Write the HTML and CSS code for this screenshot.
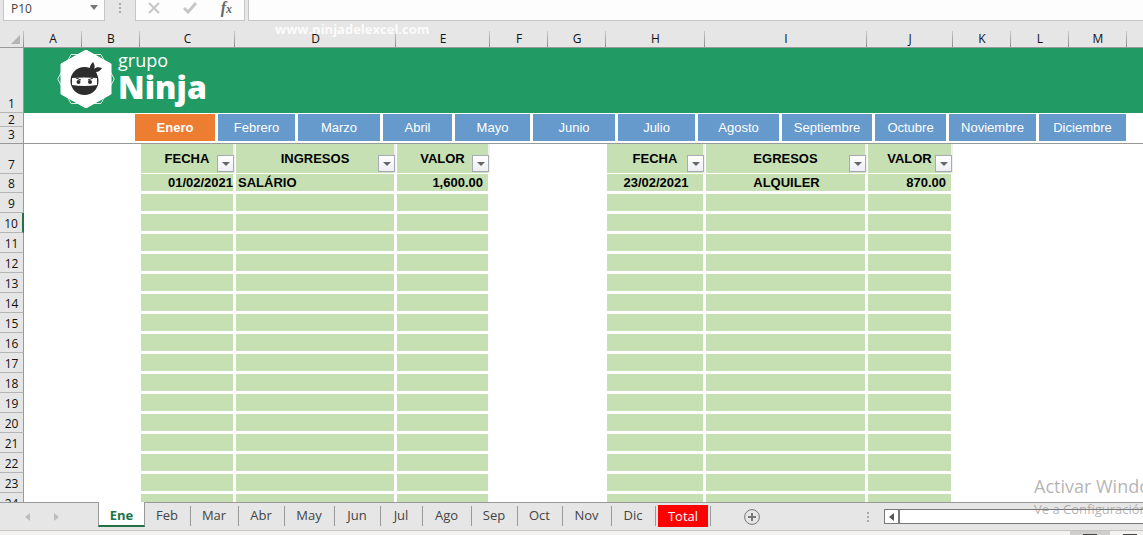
FILE: index.html
```
<!DOCTYPE html>
<html lang="es">
<head>
    <meta charset="UTF-8">
    <meta name="viewport" content="width=device-width, initial-scale=1.0">
    <title>Ingresos y Egresos</title>
    <link rel="stylesheet" href="styles.css">
</head>
<body>

    <div class="formula-bar">
        <div class="name-box">
            <input type="text" value="P10" aria-label="Cuadro de nombres">
            <button type="button" aria-label="Ver nombres"><span class="arrow-down"></span></button>
        </div>
        <span class="dots"></span>
        <div class="formula-buttons">
            <button type="button" aria-label="Cancelar">
                <svg width="12" height="12" viewBox="0 0 12 12"><path d="M1 1L11 11M11 1L1 11" stroke="#c6c6c6" stroke-width="2" fill="none"/></svg>
            </button>
            <button type="button" aria-label="Introducir">
                <svg width="14" height="12" viewBox="0 0 14 12"><path d="M1 6L5 10L13 1" stroke="#c6c6c6" stroke-width="3" fill="none"/></svg>
            </button>
            <button type="button" class="fx" aria-label="Insertar función">f<small>x</small></button>
        </div>
        <input type="text" class="formula-input" aria-label="Barra de fórmulas">
    </div>

    <main class="sheet">
        <table class="grid">
            <colgroup>
                <col class="w-head"><col class="w-s"><col class="w-s"><col class="w-c"><col class="w-d"><col class="w-e"><col class="w-s">
                <col class="w-s"><col class="w-h"><col class="w-i"><col class="w-j"><col class="w-s"><col class="w-s"><col class="w-s"><col>
            </colgroup>
            <thead>
                <tr>
                    <th class="corner"><svg width="9" height="9" viewBox="0 0 9 9"><path d="M9 0V9H0Z" fill="#b4b4b4"/></svg></th>
                    <th>A</th><th>B</th><th>C</th><th>D</th><th>E</th><th>F</th><th>G</th>
                    <th>H</th><th>I</th><th>J</th><th>K</th><th>L</th><th>M</th><th></th>
                </tr>
            </thead>
            <tbody id="rows">
                <tr class="row-banner">
                    <th>1</th>
                    <td colspan="14" class="banner">
                        <div class="logo">
                            <svg width="58" height="58" viewBox="0 0 58 58">
                                <path d="M.7 29L14 4.500H44L57.300 29L44 53.500H14Z" fill="none" stroke="#d5eee2" stroke-width="1"/>
                                <path d="M29 0L54 14V44L29 58L4 44V14Z" fill="#fff" stroke="#fff" stroke-width="1" stroke-linejoin="round"/>
                                <circle cx="27.500" cy="31" r="14" fill="#2d2d2d"/>
                                <path d="M33 21C32 17 34 14 36 12C38 15 38 17 37 19C39 17 42 17 45 18C43 21 41 22 39 22C40 23 40 25 39 26Z" fill="#2d2d2d"/>
                                <path d="M15 28Q27 27 40 28V35Q27 37 15 35Z" fill="#fff"/>
                                <path d="M19 28L24 30M36 28L31 30" stroke="#2d2d2d" stroke-width="1"/>
                                <circle cx="21.500" cy="32" r="2" fill="#2d2d2d"/>
                                <circle cx="33" cy="32" r="2" fill="#2d2d2d"/>
                            </svg>
                            <div class="logo-text"><span>grupo</span><strong>Ninja</strong></div>
                        </div>
                    </td>
                </tr>
                <tr class="row-2">
                    <th>2</th>
                    <td></td><td class="months" rowspan="2" colspan="13">
                        <nav>
                            <a href="#" class="active">Enero</a><a href="#">Febrero</a><a href="#">Marzo</a><a href="#">Abril</a>
                            <a href="#">Mayo</a><a href="#">Junio</a><a href="#">Julio</a><a href="#">Agosto</a>
                            <a href="#">Septiembre</a><a href="#">Octubre</a><a href="#">Noviembre</a><a href="#">Diciembre</a>
                        </nav>
                    </td>
                </tr>
                <tr class="row-3"><th>3</th><td></td></tr>
                <tr class="row-titles">
                    <th>7</th><td></td><td></td>
                    <td class="title">FECHA<button type="button" class="filter" aria-label="Filtrar fecha"></button></td>
                    <td class="title">INGRESOS<button type="button" class="filter" aria-label="Filtrar ingresos"></button></td>
                    <td class="title">VALOR<button type="button" class="filter" aria-label="Filtrar valor"></button></td>
                    <td></td><td></td>
                    <td class="title">FECHA<button type="button" class="filter" aria-label="Filtrar fecha"></button></td>
                    <td class="title">EGRESOS<button type="button" class="filter" aria-label="Filtrar egresos"></button></td>
                    <td class="title">VALOR<button type="button" class="filter" aria-label="Filtrar valor"></button></td>
                    <td></td><td></td><td></td><td></td>
                </tr>
                <tr class="row-first">
                    <th>8</th><td></td><td></td>
                    <td class="cell right">01/02/2021</td><td class="cell">SALÁRIO</td><td class="cell amount">1,600.00</td>
                    <td></td><td></td>
                    <td class="cell center">23/02/2021</td><td class="cell center">ALQUILER</td><td class="cell amount">870.00</td>
                    <td></td><td></td><td></td><td></td>
                </tr>
            </tbody>
        </table>
    </main>

    <footer>
        <div class="tab-bar">
            <div class="tab-arrows">
                <button type="button" aria-label="Anterior"><svg width="5" height="8" viewBox="0 0 5 8"><path d="M5 0V8L0 4Z" fill="#bdbdbd"/></svg></button>
                <button type="button" aria-label="Siguiente"><svg width="5" height="8" viewBox="0 0 5 8"><path d="M0 0V8L5 4Z" fill="#bdbdbd"/></svg></button>
            </div>
            <div class="tabs">
                <button type="button" class="selected">Ene</button>
                <button type="button">Feb</button>
                <button type="button">Mar</button>
                <button type="button">Abr</button>
                <button type="button">May</button>
                <button type="button">Jun</button>
                <button type="button">Jul</button>
                <button type="button">Ago</button>
                <button type="button">Sep</button>
                <button type="button">Oct</button>
                <button type="button">Nov</button>
                <button type="button">Dic</button>
                <button type="button" class="total"><span>Total</span></button>
            </div>
            <button type="button" class="add-sheet" aria-label="Hoja nueva">
                <svg width="16" height="16" viewBox="0 0 16 16"><circle cx="8" cy="8" r="7.400" fill="none" stroke="#777" stroke-width="1"/><path d="M8 4V12M4 8H12" stroke="#777" stroke-width="2"/></svg>
            </button>
            <span class="dots tab-dots"></span>
            <div class="scrollbar">
                <button type="button" aria-label="Desplazar a la izquierda"><svg width="5" height="8" viewBox="0 0 5 8"><path d="M5 0V8L0 4Z" fill="#555"/></svg></button>
            </div>
        </div>
        <div class="status-bar"><span class="view view-on"></span><span class="view"></span></div>
    </footer>

    <div class="site-mark">www.ninjadelexcel.com</div>
    <div class="activate"><p>Activar Windows</p><small>Ve a Configuración</small></div>

    <script>
        // Empty rows 9 to 24
        const rows = document.getElementById('rows');
        const blank = '<td></td>';
        const cell = '<td class="cell"></td>';
        for (let i = 9; i <= 24; i++) {
            const tr = document.createElement('tr');
            tr.className = i === 10 ? 'row-data current' : 'row-data';
            tr.innerHTML = `<th>${i}</th>` + blank.repeat(2) + cell.repeat(3) + blank.repeat(2) + cell.repeat(3) + blank.repeat(4);
            rows.appendChild(tr);
        }
    </script>

</body>
</html>
```
FILE: styles.css
```
* {
    box-sizing: border-box;
}
body {
    margin: 0;
    height: 100vh;
    display: flex;
    flex-direction: column;
    position: relative;
    overflow: hidden;
    background-color: #e6e6e6;
    font-family: "Open Sans", "Noto Sans", sans-serif;
    font-size: 12px;
    color: #222;
}
button, input {
    font: inherit;
    color: inherit;
    border: none;
    background: none;
    padding: 0;
    margin: 0;
}

/* Formula bar */
.formula-bar {
    display: flex;
    flex: none;
    height: 21px;
}
.name-box, .formula-buttons, .formula-input {
    background-color: #fdfdfd;
    border: 1px solid #c6c6c6;
    border-top: none;
}
.name-box {
    display: flex;
    width: 102px;
    margin-left: 3px;
    padding: 0 6px 3px 7px;
}
.name-box input {
    flex: 1;
    min-width: 0;
    color: #444;
}
.arrow-down {
    display: block;
    border: 4px solid transparent;
    border-top: 5px solid #777;
    border-bottom: none;
    margin-bottom: 3px;
}
.dots {
    width: 2px;
    height: 10px;
    margin: 3px 14px 0;
    background: repeating-linear-gradient(#aaa 0 2px, transparent 2px 4px);
}
.formula-buttons {
    display: flex;
    justify-content: space-between;
    align-items: center;
    width: 110px;
    padding: 0 12px 4px;
}
.formula-buttons svg {
    display: block;
}
.fx {
    font-family: "Liberation Serif", serif;
    font-style: italic;
    font-weight: bold;
    font-size: 16px;
    line-height: 16px;
    color: #666;
}
.fx small {
    font-size: 12px;
}
.formula-input {
    flex: 1;
    min-width: 0;
    margin-left: 3px;
    border-right: none;
}

/* Sheet */
.sheet {
    flex: 1;
    min-height: 0;
    overflow: hidden;
    background-color: #fff;
}
.grid {
    width: 100%;
    table-layout: fixed;
    border-collapse: separate;
    border-spacing: 0;
}
.w-head { width: 24px; }
.w-s { width: 58px; }
.w-c { width: 95px; }
.w-d { width: 161px; }
.w-e { width: 94px; }
.w-h { width: 99px; }
.w-i { width: 162px; }
.w-j { width: 86px; }
.grid th, .grid td {
    padding: 0;
}
.grid th {
    background-color: #e6e6e6;
    font-weight: normal;
    color: #111;
}
.grid thead th {
    height: 27px;
    padding-top: 10px;
    line-height: 16px;
    border-bottom: 1px solid #999;
    background-image: linear-gradient(#c8c8c8, #8c8c8c);
    background-size: 1px 16px;
    background-position: right bottom;
    background-repeat: no-repeat;
}
.grid thead th:last-child {
    background-image: none;
}
.corner svg {
    display: block;
    margin-left: 11px;
}
tbody th {
    border-right: 1px solid #999;
    border-bottom: 1px solid #b4b4b4;
    line-height: 16px;
    vertical-align: bottom;
}
.current th {
    border-right: 2px solid #217346;
}
.row-banner { height: 65px; }
.row-2 { height: 14px; }
.row-3 { height: 17px; }
.row-titles { height: 30px; }
.row-first { height: 19px; }
.row-data { height: 20px; }
.row-2 th {
    line-height: 12px;
}
.row-3 th, .row-3 td, .months {
    border-bottom: 1px solid #999;
}
.banner {
    background-color: #219a63;
    color: #fff;
    vertical-align: top;
}

.logo {
    display: flex;
    height: 65px;
    padding: 2px 0 0 33px;
}
.logo-text {
    display: flex;
    flex-direction: column;
    margin-left: 3px;
}
.logo-text span {
    font-size: 18px;
    line-height: 20px;
}
.logo-text strong {
    font-size: 32px;
    font-weight: 800;
    line-height: 34px;
}

.months {
    vertical-align: top;
}
.months nav {
    display: grid;
    grid-template-columns: 81px 78px 83px 70px 76px 83px 78px 82px 91px 72px 88px 88px;
    column-gap: 2px;
    padding-top: 1px;
    margin-left: 53px;
}
.months a {
    height: 27px;
    border-right: 1px solid #fff;
    background-color: #6699cc;
    color: #fff;
    font: 13px/27px "Liberation Sans", Arial, sans-serif;
    text-align: center;
    text-decoration: none;
}
.months a.active {
    background-color: #ed7d31;
    font-weight: bold;
}

.title, .cell {
    background-color: #c6e0b4;
    border: solid #fff;
    color: #000;
    font: bold 13px/16px "Liberation Sans", Arial, sans-serif;
}
.title {
    position: relative;
    border-width: 0 2px 1px 1px;
    border-right-color: #f0f0f0;
    text-align: center;
}
.grid .cell {
    border-width: 1px 2px 2px 1px;
    padding-left: 2px;
}
.row-first .cell {
    border-top: none;
}
.right, .amount {
    text-align: right;
}
.grid .amount {
    padding-right: 5px;
}
.center {
    text-align: center;
}
.filter {
    position: absolute;
    right: -1px;
    bottom: 1px;
    width: 17px;
    height: 17px;
    border: 1px solid #a5abb5;
    background: linear-gradient(#fff, #eceef4);
}
.filter::after {
    content: "";
    display: block;
    width: 0;
    margin: 1px auto 0;
    border: 4px solid transparent;
    border-top-color: #666;
    border-bottom: none;
}

/* Sheet tabs */
.tab-bar {
    display: flex;
    height: 28px;
    border-top: 1px solid #999;
}
.tab-arrows {
    display: flex;
    gap: 24px;
    width: 98px;
    padding-left: 25px;
}
.tabs {
    display: grid;
    grid-template-columns: 47px 46px 48px 46px 50px 46px 42px 49px 46px 45px 49px 44px 55px;
    height: 24px;
    font-size: 13px;
    color: #444;
}
.tabs button {
    padding-right: 2px;
    background: linear-gradient(#999, #999) right 3px / 1px 20px no-repeat;
}
.tabs .selected {
    margin-top: -1px;
    padding: 3px 0 0;
    background: #fff;
    border: solid #999;
    border-width: 0 1px;
    border-bottom: 2px solid #217346;
    color: #217346;
    font-weight: bold;
}
.tabs .total {
    padding: 1px 3px 0 2px;
}
.total span {
    display: block;
    background-color: #f00;
    color: #fff;
    line-height: 22px;
}
.add-sheet {
    margin-left: 33px;
}
.add-sheet svg {
    display: block;
}
.tab-dots {
    margin: 9px 15px 0 auto;
}
.scrollbar {
    width: 259px;
    height: 15px;
    margin-top: 6px;
    border: 1px solid #777;
    border-right: none;
    background-color: #fff;
}
.scrollbar button {
    display: flex;
    align-items: center;
    justify-content: center;
    width: 15px;
    height: 13px;
    border-right: 2px solid #777;
}
.status-bar {
    display: flex;
    justify-content: flex-end;
    height: 5px;
    border-top: 1px solid #c6c6c6;
    background-color: #f3f2f1;
}
.view {
    width: 33px;
    background: linear-gradient(#444, #444) 13px bottom / 14px 1px no-repeat;
}
.view-on {
    width: 40px;
    background-color: #d0cecd;
}

/* Text over the sheet */
.site-mark {
    position: absolute;
    top: 20px;
    left: 275px;
    font-size: 13px;
    font-weight: bold;
    line-height: 18px;
    color: rgba(255, 255, 255, 0.85);
}
.activate {
    position: absolute;
    left: calc(100% - 109px);
    bottom: 16px;
    white-space: nowrap;
    color: rgba(130, 130, 130, 0.6);
}
.activate p {
    margin: 0;
    font-size: 18px;
    line-height: 26px;
}
.activate small {
    display: block;
    font-size: 13px;
    line-height: 20px;
}
```
